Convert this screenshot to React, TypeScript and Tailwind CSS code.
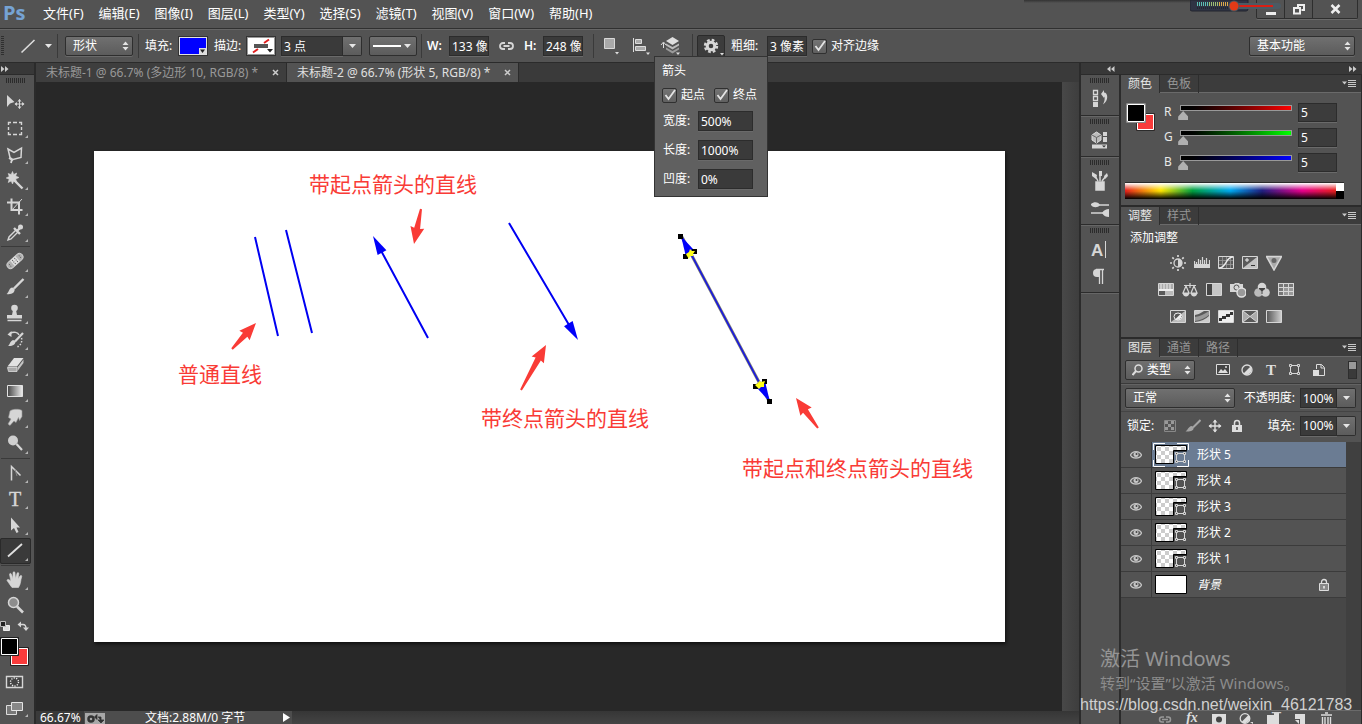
import { useState } from 'react';
import type { ReactNode } from 'react';

const LIGHT = '#d6d6d6';

const menus = ['文件(F)', '编辑(E)', '图像(I)', '图层(L)', '类型(Y)', '选择(S)', '滤镜(T)', '视图(V)', '窗口(W)', '帮助(H)'];

function Svg({ w, h, children, className = '' }: { w: number; h: number; children: ReactNode; className?: string }) {
  return (
    <svg width={w} height={h} viewBox={`0 0 ${w} ${h}`} fill="none" className={`block shrink-0 ${className}`} aria-hidden="true">
      {children}
    </svg>
  );
}

function UpDown() {
  return (
    <Svg w={7} h={10} className="pointer-events-none absolute right-1 top-1/2 -translate-y-1/2">
      <path d="M0.5 4L3.5 0.5L6.5 4zM0.5 6L3.5 9.5L6.5 6z" fill="#e4e4e4" />
    </Svg>
  );
}

function Down() {
  return <Svg w={7} h={4}><path d="M0 0H7L3.5 4z" fill="#e6e6e6" /></Svg>;
}

function Picker({ label, options, className }: { label: string; options: string[]; className: string }) {
  return (
    <div className={`relative h-5 shrink-0 ${className}`}>
      <select aria-label={label} className="block h-full w-full appearance-none rounded-[2px] border border-[#2e2e2e] bg-linear-to-b from-[#707070] to-[#5c5c5c] pl-[7px] text-xs leading-4 text-white shadow-[0_1px_0_#6a6a6a]">
        {options.map(o => <option key={o}>{o}</option>)}
      </select>
      <UpDown />
    </div>
  );
}

function Field({ label, value, className }: { label: string; value: string; className: string }) {
  return (
    <input
      aria-label={label}
      defaultValue={value}
      className={`block shrink-0 border border-[#2c2c2c] bg-[#3a3a3a] text-xs leading-4 text-white shadow-[0_1px_0_#6a6a6a] outline-none ${className}`}
    />
  );
}

function Check({ label }: { label: string }) {
  return (
    <label className="flex shrink-0 items-center gap-1 whitespace-nowrap text-white">
      <span className="relative block h-[15px] w-[15px]">
        <input type="checkbox" defaultChecked className="peer block h-[15px] w-[15px] appearance-none rounded-[2px] border border-[#303030] bg-linear-to-b from-[#747474] to-[#606060]" />
        <svg width="15" height="15" viewBox="0 0 15 15" fill="none" className="pointer-events-none absolute left-0 top-0 hidden peer-checked:block">
          <path d="M3.5 7L6.5 11L13 2" stroke="#e4e4e4" strokeWidth="1.8" />
        </svg>
      </span>
      {label}
    </label>
  );
}

function Divider({ className = '' }: { className?: string }) {
  return <div className={`h-6 w-px shrink-0 bg-[#3a3a3a] ${className}`} />;
}

function Grip({ className = '' }: { className?: string }) {
  return <div className={`h-[5px] w-5 bg-[repeating-linear-gradient(90deg,#2b2b2b_0_1px,#535353_1px_2px)] ${className}`} />;
}

/* ---------- top bars ---------- */

function RecorderBadge() {
  return (
    <Svg w={92} h={12} className="pointer-events-none absolute right-[80px] top-0">
      <path d="M0 0H58V9Q58 11 56 11H2Q0 11 0 9z" fill="#2f3444" stroke="#22252f" />
      {Array.from({ length: 16 }, (_, i) => (
        <path key={i} d={`M${7.5 + i * 2} 2v4`} stroke={i < 6 ? '#5cc0b4' : i < 11 ? '#9dbf73' : '#dda94b'} />
      ))}
      <path d="M7 8H40" stroke="#16181f" strokeDasharray="1 1" />
      <rect x="40" y="3" width="51" height="6" rx="3" fill="#4c5a63" />
      <rect x="46" y="5" width="37" height="2" fill="#d91f14" />
      <circle cx="44" cy="6" r="5.5" fill="#48565e" />
      <circle cx="44" cy="6" r="4.5" fill="#e23a17" />
    </Svg>
  );
}

function MenuBar() {
  return (
    <header className="relative flex h-[29px] shrink-0 items-start border-b border-[#303030] bg-[#535353]">
      <span className="w-9 pl-[3px] font-['Open_Sans'] text-[20px] leading-[26px] font-bold text-[#76a3d4]">Ps</span>
      <nav className="flex gap-px text-[13px] leading-[27px] text-white">
        {menus.map(m => <button key={m} className="shrink-0 px-[7px] whitespace-nowrap">{m}</button>)}
      </nav>
      <div className="ml-auto mr-1 flex h-[19px] rounded-b-[2px] border border-t-0 border-[#2e2e2e] shadow-[0_1px_0_#6a6a6a]">
        <button aria-label="最小化" className="grid w-7 place-items-center border-r border-[#2e2e2e]">
          <Svg w={12} h={14}><path d="M1 11.5h10" stroke="#eee" strokeWidth="3" /></Svg>
        </button>
        <button aria-label="还原" className="grid w-7 place-items-center border-r border-[#2e2e2e]">
          <Svg w={12} h={12}><path d="M5 4V2h6v5H8.5M1 5h6v5.5H1z" stroke="#eee" strokeWidth="2" /></Svg>
        </button>
        <button aria-label="关闭" className="grid w-11 place-items-center">
          <Svg w={11} h={10}><path d="M1.5 1l8 8m0-8l-8 8" stroke="#eee" strokeWidth="2.5" /></Svg>
        </button>
      </div>
      <div className="pointer-events-none absolute right-[150px] top-0 h-[3px] w-[188px] bg-linear-to-b from-[#333] to-transparent" />
      <RecorderBadge />
    </header>
  );
}

function ArrowheadPopup() {
  const rows = [['宽度', '500%'], ['长度', '1000%'], ['凹度', '0%']];
  return (
    <div className="absolute -left-[43px] top-[21px] z-20 flex h-[141px] w-[114px] flex-col border border-[#333] bg-[#606060] pl-[7px] text-xs leading-4 text-white">
      <div className="mt-[6px]">箭头</div>
      <div className="my-2 flex h-[18px] items-center gap-[9px]">
        <Check label="起点" />
        <Check label="终点" />
      </div>
      {rows.map(([name, value]) => (
        <div key={name} className="flex h-[29px] shrink-0 items-start">
          <span className="w-9 pl-px leading-5">{name}:</span>
          <Field label={name} value={value} className="h-5 w-[55px] pl-[2px]" />
        </div>
      ))}
    </div>
  );
}

function OptionsBar() {
  return (
    <div className="flex h-[33px] shrink-0 items-center border-t border-[#666] bg-[#535353] text-xs leading-4 whitespace-nowrap text-white">
      <div className="ml-px h-5 w-[3px] bg-[repeating-linear-gradient(#2f2f2f_0_1px,#535353_1px_2px)]" />
      <button aria-label="直线工具" className="ml-4 flex items-center gap-[9px]">
        <Svg w={16} h={16}><path d="M1.5 14.5L14.5 2" stroke="#ddd" strokeWidth="1.6" /></Svg>
        <Down />
      </button>
      <Divider className="ml-[5px]" />
      <Picker label="工具模式" options={['形状', '路径', '像素']} className="ml-[7px] w-[68px]" />
      <Divider className="ml-[5px]" />
      <span className="ml-[6px] w-[34px]">填充:</span>
      <button aria-label="填充颜色" className="flex h-[18px] w-7 items-end justify-end border border-[#e0e0e0] bg-[#0000ff] outline outline-[#333]">
        <Svg w={7} h={6}><path d="M0 0h7v6H0z" fill="#ddd" /><path d="M1 1.5h5L3.5 5z" fill="#222" /></Svg>
      </button>
      <span className="ml-[7px] w-[33px]">描边:</span>
      <button aria-label="描边颜色" className="border border-[#999] outline outline-[#333]">
        <Svg w={26} h={16}>
          <path d="M0 0h26v16H0z" fill="#fff" />
          <path d="M5 14.5L10 11M16 5L21 1.5" stroke="#e02020" strokeWidth="2" />
          <path d="M6 6h14v4H6z" fill="#555" />
          <path d="M19 11h6l-3 3.5z" fill="#222" />
        </Svg>
      </button>
      <div className="ml-[6px] flex">
        <Field label="描边宽度" value="3 点" className="h-5 w-[62px] pl-[2px]" />
        <button aria-label="描边宽度选项" className="grid h-5 w-[19px] place-items-center rounded-r-[2px] border border-l-0 border-[#2e2e2e] bg-linear-to-b from-[#707070] to-[#5c5c5c]"><Down /></button>
      </div>
      <button aria-label="描边类型" className="ml-[7px] flex h-5 w-12 items-center gap-[3px] rounded-[2px] border border-[#2e2e2e] bg-linear-to-b from-[#707070] to-[#5c5c5c] pl-[3px]">
        <span className="h-[2px] w-7 bg-white" />
        <Down />
      </button>
      <Divider className="ml-1" />
      <span className="ml-[5px] w-[22px] font-semibold">W:</span>
      <Field label="宽度" value="133 像素" className="h-5 w-10 pl-[2px]" />
      <button aria-label="链接宽高" className="ml-[10px]">
        <Svg w={15} h={10}><path d="M6 2H4a3 3 0 0 0 0 6h2M9 2h2a3 3 0 0 1 0 6H9M4.5 5h6" stroke={LIGHT} strokeWidth="1.8" /></Svg>
      </button>
      <span className="ml-[10px] w-[19px] font-semibold">H:</span>
      <Field label="高度" value="248 像素" className="h-5 w-10 pl-[2px]" />
      <Divider className="ml-[10px]" />
      <button aria-label="路径操作" className="ml-[9px]">
        <Svg w={18} h={20}>
          <path d="M1.5 2.5h10v10h-10z" fill="#a9a9a9" stroke="#d8d8d8" />
          <path d="M12 16h4l-2 2.5z" fill="#ddd" />
        </Svg>
      </button>
      <button aria-label="路径对齐方式" className="ml-[11px]">
        <Svg w={18} h={20}>
          <path d="M1.5 2v14" stroke="#ddd" />
          <path d="M3.5 3.5h6v4h-6zM3.5 10.5h10v4h-10z" fill="#aaa" stroke="#ddd" />
          <path d="M14 16.5h4l-2 2.5z" fill="#ddd" />
        </Svg>
      </button>
      <button aria-label="路径排列方式" className="ml-[10px]">
        <Svg w={22} h={20}>
          <path d="M3.5 12V7M1 9l2.5-3L6 9" stroke="#ddd" />
          <path d="M6 13.5l6.5 4 6.5-4v-2l-6.5 3.5L6 11.5z" fill="#9a9a9a" />
          <path d="M6 9.5l6.5 4 6.5-4v-2l-6.5 3.5L6 7.5z" fill="#bbb" />
          <path d="M6 5l6.5-4L19 5l-6.5 4z" fill="#dedede" />
          <path d="M16 16.5h4l-2 2.5z" fill="#ddd" />
        </Svg>
      </button>
      <Divider className="ml-[10px]" />
      <div className="relative ml-1">
        <button aria-label="几何选项" className="block h-[22px] w-7 rounded-[2px] border border-[#2b2b2b] bg-[#3c3c3c] pl-[5px]">
          <Svg w={21} h={20}>
            <circle cx="8" cy="10" r="6" stroke={LIGHT} strokeWidth="2.4" strokeDasharray="2.7 2.01" />
            <circle cx="8" cy="10" r="3.8" stroke={LIGHT} strokeWidth="3" />
            <path d="M17 17h4l-2 2.5z" fill="#ddd" />
          </Svg>
        </button>
        <ArrowheadPopup />
      </div>
      <span className="ml-[6px] w-9">粗细:</span>
      <Field label="粗细" value="3 像素" className="h-5 w-10 pl-[2px]" />
      <div className="ml-[5px]"><Check label="对齐边缘" /></div>
      <Picker label="工作区" options={['基本功能', '绘画', '摄影', '排版规则']} className="ml-auto mr-[7px] w-[106px]" />
    </div>
  );
}

/* ---------- tools ---------- */

const tools: Record<string, { name: string; art: ReactNode; corner?: boolean }> = {
  move: {
    name: '移动工具', art: <>
      <path d="M7 6V18L10 14.5L14.5 13z" fill={LIGHT} />
      <path d="M19.5 10.5v9M15 15h9" stroke={LIGHT} />
      <path d="M17.5 12.5l2-2.5 2 2.5zM17.5 17.5l2 2.5 2-2.5zM17 13l-2.5 2 2.5 2zM22 13l2.5 2-2.5 2z" fill={LIGHT} />
    </>,
  },
  marquee: { name: '矩形选框工具', corner: true, art: <path d="M8.5 10V7.5H11M13 7.5h4M19 7.5h2.5V10M21.5 12v3M21.5 17v2.5H19M17 19.5h-4M11 19.5H8.5V17M8.5 15v-3" stroke={LIGHT} strokeWidth="1.4" /> },
  lasso: { name: '多边形套索工具', corner: true, art: <><path d="M8 8L14 11.5L21.5 7L21 16.5L13 18.5L10 16.5z" stroke={LIGHT} strokeWidth="1.5" /><path d="M9 17l4 2.5M12 18l-1 4" stroke={LIGHT} strokeWidth="1.8" /></> },
  wand: { name: '魔棒工具', corner: true, art: <><path d="M12.5 4.5l1.2 3 3-1.5-1 3 3.3 1.5-3.3 1.5 1 3.5-3-1.5-1.2 3-1.3-3-3 1.5 1-3.2-3-1.3 3-1.5-1-3 3 1z" fill={LIGHT} stroke={LIGHT} strokeWidth=".6" /><path d="M14 13l8.5 8.5" stroke={LIGHT} strokeWidth="2.4" /></> },
  crop: { name: '裁剪工具', corner: true, art: <><path d="M7 9.5h12V21.5M11.5 5.5V17h11" stroke={LIGHT} strokeWidth="2" /><path d="M12 17L22 6" stroke={LIGHT} /></> },
  dropper: { name: '吸管工具', corner: true, art: <><path d="M16 11l-7 7-1 3 3-1 7-7" stroke={LIGHT} strokeWidth="1.4" /><path d="M14 9l6 6M17 12l4-4" stroke={LIGHT} strokeWidth="2.4" /><circle cx="20.5" cy="8" r="2.5" fill={LIGHT} /></> },
  heal: { name: '污点修复画笔工具', corner: true, art: <g transform="rotate(-42 15 12)"><rect x="5.5" y="8.5" width="19" height="7" rx="3.5" fill="#b0b0b0" stroke="#cfcfcf" /><path d="M11.5 8.5h7v7h-7z" fill="#dedede" /><path d="M13 10h1M16 10h1M13 12h1M16 12h1M13 14h1M16 14h1M8 11h1M8 13h1M21 11h1M21 13h1" stroke="#555" /></g> },
  brush: { name: '画笔工具', corner: true, art: <><path d="M23.5 4L14 13.5" stroke={LIGHT} strokeWidth="2.4" /><path d="M14.5 13.5c1 4-3 6.5-8 5.5 2.5-1.2 2-5.5 5.5-6.5z" fill={LIGHT} /></> },
  stamp: { name: '仿制图章工具', corner: true, art: <><circle cx="14.5" cy="7" r="3.3" fill={LIGHT} /><path d="M13 9h3l1 5h5v3.5H7V14h5z" fill={LIGHT} /><path d="M7.5 19.5h14" stroke={LIGHT} strokeWidth="1.5" /></> },
  history: { name: '历史记录画笔工具', corner: true, art: <><path d="M10 6.5c4-2.5 8-1 9 1.5" stroke={LIGHT} strokeWidth="1.5" /><path d="M11.5 4v6L7.5 7.5z" fill={LIGHT} /><path d="M23 6l-8 8.5" stroke={LIGHT} strokeWidth="2.2" /><path d="M15.5 14c.5 3.5-3.5 5.5-7.5 5 2-1 1.5-4.5 5-6z" fill={LIGHT} /><path d="M21.5 11c1 4-1 8-5 9" stroke={LIGHT} strokeWidth="1.5" strokeDasharray="1.5 1.5" /></> },
  eraser: { name: '橡皮擦工具', corner: true, art: <><path d="M7.5 13.5L14 5h9.5L17 13.5z" fill="#e2e2e2" /><path d="M7.5 14.5H17V18.5H8.5z" fill="#a9a9a9" stroke="#ddd" strokeWidth=".8" /><path d="M17.5 14.5L23.5 6.5V10l-6 8z" fill="#c4c4c4" /></> },
  gradient: { name: '渐变工具', corner: true, art: <><defs><linearGradient id="gt"><stop stopColor="#444" /><stop offset="1" stopColor="#eee" /></linearGradient></defs><path d="M7.5 6.5h15v11h-15z" fill="url(#gt)" stroke="#e2e2e2" /></> },
  smudge: { name: '涂抹工具', corner: true, art: <path d="M10 6c2-2 9-2.5 12-.5v6l-2.5 4-1-3-2.5 5-2-1.5-4 4.5L8 19l3-5-2.5-1.5z" fill={LIGHT} stroke="#999" strokeWidth=".6" /> },
  dodge: { name: '减淡工具', corner: true, art: <><circle cx="13" cy="9.5" r="5" fill="#cfcfcf" /><path d="M16.5 13l5.5 6" stroke={LIGHT} strokeWidth="2.2" /></> },
  pen: { name: '钢笔工具', corner: true, art: <><path d="M11.5 20.5V6.5L20.5 15.5" stroke={LIGHT} strokeWidth="1.5" /><path d="M15 9.5l2 6.5" stroke="#888" /></> },
  type: { name: '横排文字工具', corner: true, art: <text x="15" y="20" textAnchor="middle" fontFamily="Liberation Serif, serif" fontSize="20" fill={LIGHT} stroke={LIGHT} strokeWidth=".4">T</text> },
  select: { name: '路径选择工具', corner: true, art: <path d="M11 5.5V18.5L14 16L16.5 21L18.5 20L16.5 15.5H20z" fill={LIGHT} /> },
  line: { name: '直线工具', corner: true, art: <path d="M8 18.5L22 6" stroke="#e0e0e0" strokeWidth="1.8" /> },
  hand: { name: '抓手工具', corner: true, art: <path d="M12 20.5C10 18 8.5 15.5 7 13.5c0-1.5 2-1.5 4 .8L9.5 7.5c0-1.5 1.7-1.5 2 0l1.5 4V6c0-1.6 2-1.6 2 0l.5 5.5L17 6.5c.5-1.5 2-1 1.8.5L18 12l2-3c.8-1.2 2.2-.4 1.7.8C20.5 13 21 17 18.5 20.5z" fill={LIGHT} stroke={LIGHT} strokeWidth=".6" /> },
  zoom: { name: '缩放工具', art: <><circle cx="13.5" cy="9.5" r="5" fill="#8d8d8d" stroke={LIGHT} strokeWidth="1.5" /><path d="M17 13.5l6 6" stroke={LIGHT} strokeWidth="2.6" /></> },
};

function ToolGroup({ ids }: { ids: string[] }) {
  return (
    <>
      {ids.map(id => {
        const t = tools[id];
        return (
          <button key={id} aria-label={t.name} className={`block h-[26px] w-[31px] shrink-0 ${id === 'line' ? 'rounded-[2px] bg-[#3a3a3a] outline -outline-offset-1 outline-[#2a2a2a]' : ''}`}>
            <Svg w={30} h={26}>
              {t.art}
              {t.corner && <path d="M28 20v3h-3z" fill="#b5b5b5" />}
            </Svg>
          </button>
        );
      })}
    </>
  );
}

function ToolRule({ className = 'my-px' }: { className?: string }) {
  return <div className={`ml-px h-px w-[29px] shrink-0 bg-[#3a3a3a] ${className}`} />;
}

function ToolBar() {
  return (
    <aside className="flex w-9 shrink-0 flex-col overflow-hidden border-r-2 border-[#2b2b2b] bg-[#535353]">
      <button aria-label="展开工具栏" className="flex h-[13px] shrink-0 items-center border-y border-[#2b2b2b] bg-[#383838] pl-px">
        <Svg w={8} h={6}><path d="M0 0l3.5 3L0 6zM4 0l3.5 3L4 6z" fill="#ccc" /></Svg>
      </button>
      <Grip className="mt-[3px] mb-[6px] ml-[6px] shrink-0" />
      <ToolGroup ids={['move', 'marquee', 'lasso', 'wand', 'crop', 'dropper']} />
      <ToolRule className="mt-px mb-[2px]" />
      <ToolGroup ids={['heal', 'brush', 'stamp', 'history', 'eraser', 'gradient', 'smudge', 'dodge']} />
      <ToolRule />
      <ToolGroup ids={['pen', 'type', 'select', 'line']} />
      <ToolRule />
      <ToolGroup ids={['hand', 'zoom']} />
      <Svg w={30} h={80}>
        <path d="M3.5 6.5h6v5h-6z" fill="#ddd" stroke="#eee" />
        <path d="M0.5 2.5h5v5h-5z" fill="#222" stroke="#bbb" />
        <path d="M20 5.5h3q3 0 3 4" stroke={LIGHT} strokeWidth="1.4" />
        <path d="M21 2.5v6l-3.5-3zM23 8.5h6l-3 3.5z" fill={LIGHT} />
        <path d="M10.5 28.5h18v18h-18z" fill="#f93b3b" stroke="#222" /><path d="M11.5 29.5h16v16h-16z" stroke="#fff" />
        <path d="M0.5 18.5h18v18h-18z" fill="#000" stroke="#222" /><path d="M1.5 19.5h16v16h-16z" stroke="#fff" />
        <path d="M6.5 57.5h16v11h-16z" fill="#444" stroke={LIGHT} strokeWidth="1.4" />
        <circle cx="14.5" cy="63" r="4" stroke="#eee" strokeWidth="1.4" strokeDasharray="1.2 1.3" />
      </Svg>
      <button aria-label="更改屏幕模式" className="shrink-0">
        <Svg w={30} h={22}>
          <path d="M6.5 6.5h10v9h-10z" fill="#777" stroke="#ddd" />
          <path d="M11.5 3.5h11v8h-11z" fill="#888" stroke="#e5e5e5" />
          <path d="M28 15v3h-3z" fill="#b5b5b5" />
        </Svg>
      </button>
    </aside>
  );
}

/* ---------- document ---------- */

function angle(x1: number, y1: number, x2: number, y2: number) {
  return (Math.atan2(y2 - y1, x2 - x1) * 180) / Math.PI;
}

function RedArrow({ from, to }: { from: [number, number]; to: [number, number] }) {
  const len = Math.hypot(to[0] - from[0], to[1] - from[1]);
  return (
    <g transform={`translate(${to[0]} ${to[1]}) rotate(${angle(...from, ...to)})`}>
      <path d={`M0 0L-17 -7L-16 -3L${-len} -1V1L-16 3L-17 7z`} fill="#f93b36" />
    </g>
  );
}

function Head({ from, to }: { from: [number, number]; to: [number, number] }) {
  return (
    <path d="M0 0L-19 -5V5z" fill="#0000fa" transform={`translate(${to[0]} ${to[1]}) rotate(${angle(...from, ...to)})`} />
  );
}

function Drawing() {
  return (
    <svg width="911" height="491" viewBox="0 0 911 491" fill="none" className="absolute left-0 top-0">
      <g stroke="#0000f2" strokeWidth="2">
        <path d="M161 86L184 185M192 79L218 182M334 187L284 94M415 72L478 179" />
        <path d="M588 86L675 250" stroke="#777" strokeWidth="3" />
        <path d="M588 86L675 250" stroke="#1515e8" strokeWidth="1.5" />
      </g>
      <Head from={[334, 187]} to={[279, 85]} />
      <Head from={[415, 72]} to={[484, 189]} />
      <Head from={[676, 251]} to={[587, 85]} />
      <Head from={[587, 85]} to={[676, 251]} />
      <path d="M591 105l9-4M660 235l10-4" stroke="#000" strokeWidth="2" />
      <path d="M584 83h5v5h-5zM589 103h5v5h-5zM598 98h5v5h-5zM659 233h5v5h-5zM668 228h5v5h-5zM673 248h5v5h-5z" fill="#000" />
      <path d="M592 103l3-2 1-3 2 2 3 0-2 3 0 2-3 0-1 3-2-3zM661 234l3-2 1-2 2 1 4-1-1 3 0 3-3 0-2 2-2-2z" fill="#ffff1a" />
      <RedArrow from={[327, 58]} to={[320, 93]} />
      <RedArrow from={[138, 198]} to={[162, 172]} />
      <RedArrow from={[427, 239]} to={[452, 194]} />
      <RedArrow from={[724, 277]} to={[702, 247]} />
    </svg>
  );
}

function DocTab({ title, active }: { title: string; active?: boolean }) {
  return (
    <div className={`flex h-[19px] items-center border-r border-[#2b2b2b] pr-[7px] pl-[10px] ${active ? 'bg-[#535353] text-[#e0e0e0]' : 'bg-[#3e3e3e] text-[#999]'}`}>
      <button className="text-xs leading-[18px] whitespace-nowrap">{title}</button>
      <button aria-label="关闭文档" className="ml-[14px]">
        <Svg w={7} h={7}><path d="M1 1l5 5m0-5l-5 5" stroke="#ccc" strokeWidth="1.5" /></Svg>
      </button>
    </div>
  );
}

function DocumentArea() {
  return (
    <main className="flex min-w-0 flex-1 flex-col">
      <div className="flex h-5 shrink-0 border-t border-[#2b2b2b] bg-[#3a3a3a]">
        <DocTab title="未标题-1 @ 66.7% (多边形 10, RGB/8) *" />
        <DocTab title="未标题-2 @ 66.7% (形状 5, RGB/8) *" active />
      </div>
      <div className="flex min-h-0 flex-1">
        <div className="flex min-w-0 flex-1 bg-[#282828] pt-[69px] pr-[57px] pb-[69px] pl-[58px]">
          <div className="relative flex-1 overflow-hidden bg-white text-[21px] leading-7 whitespace-nowrap text-[#f93b36] shadow-[1px_2px_3px_#111]">
            <Drawing />
            <span className="absolute left-[215px] top-[19px]">带起点箭头的直线</span>
            <span className="absolute left-[84px] top-[209px]">普通直线</span>
            <span className="absolute left-[387px] top-[253px]">带终点箭头的直线</span>
            <span className="absolute left-[648px] top-[303px]">带起点和终点箭头的直线</span>
          </div>
        </div>
        <div className="w-[17px] shrink-0 bg-linear-to-r from-[#484848] to-[#3e3e3e]" />
      </div>
      <div className="flex h-[13px] shrink-0 items-start bg-linear-to-b from-[#363636] to-[#444] text-xs leading-[13px] text-white">
        <div className="flex h-[13px] w-[256px] items-center bg-[#4d4d4d]">
          <span className="h-full w-12 bg-[#3a3a3a] pl-1">66.67%</span>
          <Svg w={22} h={13} className="ml-px">
            <path d="M0 2h20v11H0z" fill="#a8a8a8" />
            <circle cx="6" cy="8" r="2.5" stroke="#333" strokeWidth="2.5" />
            <path d="M13 6h3v4M12 3.5L9.5 6L12 8.5zM13 9h6l-3 3z" fill="#333" stroke="#333" strokeWidth=".8" />
          </Svg>
          <span className="ml-[38px]">文档:2.88M/0 字节</span>
          <button aria-label="状态栏选项" className="ml-auto pr-[2px]"><Svg w={7} h={9}><path d="M0 0l7 4.5-7 4.5z" fill="#fff" /></Svg></button>
        </div>
      </div>
    </main>
  );
}

/* ---------- collapsed dock ---------- */

function DockGroup({ children }: { children: ReactNode }) {
  return (
    <div className="flex flex-col items-center border-b border-[#2b2b2b] pt-[3px] shadow-[0_1px_0_#666]">
      <Grip className="mb-1 ml-[9px] self-start" />
      <div className="flex flex-col gap-px">{children}</div>
    </div>
  );
}

function DockButton({ name, children }: { name: string; children: ReactNode }) {
  return <button aria-label={name}><Svg w={20} h={27}>{children}</Svg></button>;
}

function Dock() {
  return (
    <div className="flex w-[38px] shrink-0 flex-col bg-[#535353]">
      <DockGroup>
        <button aria-label="历史记录" className="h-[28px] pt-[2px]"><Svg w={20} h={26}>
          <path d="M3.5 1.5h4v4h-4zM3.5 7.5h4v4h-4z" stroke={LIGHT} strokeWidth="1.3" />
          <path d="M3 13h5v5H3z" fill={LIGHT} />
          <path d="M11 5l3-4v2.5c4 0 5 8-1 12 2-4 2-7 1-8V9z" fill={LIGHT} />
        </Svg></button>
      </DockGroup>
      <DockGroup>
        <button aria-label="属性" className="h-[28px] pt-px"><Svg w={20} h={26}>
          <path d="M2 5l4.5-3L11 5v5l-4.5 3L2 10z" fill="#bbb" stroke="#ddd" />
          <path d="M2 5l4.5 2.5L11 5M6.5 7.5V13" stroke="#666" />
          <path d="M13 2h4v4h-4zM13 7h4v5h-4zM2 14.5h15v4H2z" fill={LIGHT} />
          <path d="M12 15.5h4l-2 2z" fill="#333" />
        </Svg></button>
      </DockGroup>
      <DockGroup>
        <DockButton name="画笔预设">
          <path d="M6 13h8v8H6zM8 12L4 5M10 12V4M12 12l4-5" fill={LIGHT} stroke={LIGHT} strokeWidth="1.5" />
          <path d="M2 3l5 3-1 4-4-3zM9 2h3v5H9zM14 7l3-3 1 3-3 3z" fill={LIGHT} />
        </DockButton>
        <DockButton name="画笔">
          <path d="M6 8h13M1 16h12" stroke={LIGHT} strokeWidth="1.5" />
          <path d="M1 7c3-3 8-2 9 1-2 3-7 3-9 0zM12 16c2-3 4-4 7-4v8c-3 0-5-1-7-4z" fill={LIGHT} />
        </DockButton>
      </DockGroup>
      <DockGroup>
        <DockButton name="字符">
          <text x="1" y="19" fontFamily="Liberation Sans, sans-serif" fontWeight="bold" fontSize="17" fill={LIGHT}>A</text>
          <path d="M15.5 4v17" stroke={LIGHT} />
        </DockButton>
        <DockButton name="段落">
          <path d="M9.5 4.5V19M12.5 4.5V19M6 4.5h8" stroke={LIGHT} strokeWidth="1.3" />
          <path d="M9 4H7Q3 4 3 8t4 4h2z" fill={LIGHT} />
        </DockButton>
      </DockGroup>
    </div>
  );
}

/* ---------- panels ---------- */

function PanelTabs({ names }: { names: string[] }) {
  return (
    <div className="flex h-[18px] shrink-0 border-b border-[#6a6a6a] bg-[#3c3c3c] text-xs leading-4">
      {names.map((n, i) => (
        <button key={n} className={`h-[18px] w-[39px] border-r border-[#2e2e2e] ${i === 0 ? 'bg-[#535353] text-[#e6e6e6]' : 'text-[#969696]'}`}>{n}</button>
      ))}
      <button aria-label="面板菜单" className="ml-auto pr-[5px]">
        <Svg w={14} h={8}><path d="M0 1.5h5L2.5 4.5zM6 0h8v1H6zM6 2h8v1H6zM6 4h8v1H6zM6 6h8v1H6z" fill="#c8c8c8" /></Svg>
      </button>
    </div>
  );
}

const channels = [
  { name: 'R', track: 'bg-linear-to-r from-black to-[#ff0000]' },
  { name: 'G', track: 'bg-linear-to-r from-black to-[#00ff00]' },
  { name: 'B', track: 'bg-linear-to-r from-black to-[#0000ff]' },
];

function Channel({ name, track }: { name: string; track: string }) {
  const [value, setValue] = useState(5);
  return (
    <div className="flex h-[25px] items-start">
      <span className="w-4 text-xs leading-[18px] text-[#e8e8e8]">{name}</span>
      <div className="mt-[2px] min-w-0 flex-1">
        <div className={`h-[6px] border border-[#999] ${track}`} />
        <input
          type="range"
          min={0}
          max={255}
          value={value}
          aria-label={name}
          onChange={e => setValue(Number(e.target.value))}
          className="-ml-1 block h-[9px] w-[calc(100%+8px)] appearance-none bg-transparent [&::-webkit-slider-thumb]:h-[9px] [&::-webkit-slider-thumb]:w-[10px] [&::-webkit-slider-thumb]:appearance-none [&::-webkit-slider-thumb]:bg-[#b0b0b0] [&::-webkit-slider-thumb]:[clip-path:polygon(50%_0,100%_60%,100%_100%,0_100%,0_60%)]"
        />
      </div>
      <input
        aria-label={`${name} 值`}
        value={value}
        onChange={e => setValue(Number(e.target.value) || 0)}
        className="ml-[6px] h-[19px] w-[39px] border border-[#2c2c2c] bg-[#3c3c3c] pl-[2px] text-xs text-white shadow-[0_1px_0_#6a6a6a] outline-none"
      />
    </div>
  );
}

function ColorPanel() {
  return (
    <section className="shrink-0 border-b-2 border-[#2b2b2b]">
      <PanelTabs names={['颜色', '色板']} />
      <div className="flex h-[112px] flex-col">
        <div className="flex pt-[10px] pr-[24px] pl-[5px]">
          <Svg w={38} h={36}>
            <path d="M10.5 10.5h18v17h-18z" fill="#f93b3b" stroke="#2b2b2b" /><path d="M11.5 11.5h16v15h-16z" stroke="#fff" />
            <path d="M0.5 0.5h19v19h-19z" fill="#000" stroke="#8b8b8b" /><path d="M1.5 1.5h17v17h-17z" stroke="#fff" />
          </Svg>
          <div className="flex-1">{channels.map(c => <Channel key={c.name} {...c} />)}</div>
        </div>
        <div className="mt-1 mr-[17px] ml-1 flex h-[17px] border-t border-[#2b2b2b]">
          <div className="flex-1 bg-[linear-gradient(to_bottom,#fff,transparent_45%,transparent_50%,#000),linear-gradient(to_right,#e8201c,#ffe600_17%,#00a040_32%,#00a8f0_50%,#202080_65%,#e8008c_84%,#e8201c)]" />
          <div className="w-2 bg-[linear-gradient(#fff_50%,#000_50%)]" />
        </div>
      </div>
    </section>
  );
}

function Box({ children }: { children?: ReactNode }) {
  return <><path d="M0.5 1.5h15v12h-15z" fill="#5a5a5a" stroke={LIGHT} />{children}</>;
}

const adjustments: { name: string; art: ReactNode }[][] = [
  [
    { name: '亮度/对比度', art: <><circle cx="8" cy="8" r="4" stroke={LIGHT} strokeWidth="1.3" /><path d="M8 4a4 4 0 0 1 0 8z" fill={LIGHT} /><path d="M8 0v2M8 14v2M0 8h2M14 8h2M2.3 2.3l1.5 1.5M12.2 12.2l1.5 1.5M13.7 2.3l-1.5 1.5M3.8 12.2l-1.5 1.5" stroke={LIGHT} strokeWidth="1.7" /></> },
    { name: '色阶', art: <><path d="M0 9h16v4H0z" fill={LIGHT} /><path d="M.5 6v4M2.5 7v3M4.5 4v6M6.5 5v5M8.5 2v8M10.5 5v5M12.5 3v7M15.5 5v5" stroke={LIGHT} strokeWidth="1.2" /></> },
    { name: '曲线', art: <Box><path d="M4.5 2v11M8.5 2v11M12.5 2v11M1 5.5h14M1 9.5h14" stroke="#999" strokeWidth=".8" /><path d="M1 13c8 0 6-11 14-11" stroke="#eee" strokeWidth="1.5" /></Box> },
    { name: '曝光度', art: <Box><path d="M15 2v11H1z" fill="#c2c2c2" /><path d="M3 5h4M5 3v4" stroke="#eee" /><path d="M9 10.5h4" stroke="#333" /></Box> },
    { name: '自然饱和度', art: <><path d="M0.5 1.5h15L8 15z" fill="#aaa" stroke={LIGHT} strokeWidth="1.5" /><circle cx="8" cy="5.5" r="2.5" fill="#666" /></> },
  ],
  [
    { name: '色相/饱和度', art: <Box><path d="M1 2h14v5H1z" fill="#aaa" /><path d="M3 2v5M6 2v5M9 2v5M12 2v5" stroke="#eee" /><path d="M1 8h14" stroke="#eee" strokeWidth="2" /><path d="M7 9h8v4H7z" fill="#bbb" /></Box> },
    { name: '色彩平衡', art: <><path d="M2 3.5h12M8 1v5M4 4l-3 7h6zM12 4l-3 7h6z" stroke={LIGHT} strokeWidth="1.2" /><path d="M0.5 11h7q-1 3.5-3.5 3.5T.5 11zM8.5 11h7q-1 3.5-3.5 3.5T8.5 11z" fill={LIGHT} /></> },
    { name: '黑白', art: <Box><path d="M1 2h5v11H1z" fill="#444" /><path d="M6 2h9v11H6z" fill="#c6c6c6" /></Box> },
    { name: '照片滤镜', art: <><path d="M0 2h4l1-1h4l1 1h3v8H0z" fill={LIGHT} /><circle cx="6.5" cy="5.5" r="2.5" stroke="#555" /><circle cx="11.5" cy="10.5" r="4.5" fill="#999" stroke="#e4e4e4" strokeWidth="1.4" /></> },
    { name: '通道混合器', art: <><circle cx="8" cy="5" r="4.3" fill={LIGHT} /><circle cx="4.5" cy="10.5" r="4.3" fill="#bbb" /><circle cx="11.5" cy="10.5" r="4.3" fill="#ccc" /><path d="M5 6.5h6L8 9zM8 9v3" fill="#444" stroke="#444" /></> },
    { name: '颜色查找', art: <><path d="M0 1h16v13H0z" fill={LIGHT} /><path d="M1 2h4v3H1zM6 2h4v3H6zM11 2h4v3h-4zM1 6h4v3H1zM1 10h4v3H1z" fill="#777" /><path d="M6 6h4v3H6zM11 6h4v3h-4zM6 10h4v3H6zM11 10h4v3h-4z" fill="#999" /></> },
  ],
  [
    { name: '反相', art: <Box><path d="M15 2v11H1z" fill="#bbb" /><ellipse cx="8" cy="7.5" rx="4" ry="3.5" fill="#555" stroke="#eee" /><path d="M11 4.5L5 10.5q4 1 6-1.5z" fill="#eee" /></Box> },
    { name: '色调分离', art: <Box><path d="M1 8q7-1 14-6v4Q9 11 1 12z" fill="#999" /><path d="M1 13q9-1 14-6v6z" fill="#ccc" /><path d="M1 2h9Q6 5 1 6z" fill="#ccc" /></Box> },
    { name: '阈值', art: <Box><path d="M1 2h14v11H1z" fill="#eee" /><path d="M1 9h3V7h4V5h4V3h3v3h-3v2H8v2H4v2H1z" fill="#333" /></Box> },
    { name: '可选颜色', art: <Box><path d="M1 2l7 5.5L1 13zM15 2L8 7.5l7 5.5z" fill="#aaa" /><path d="M1 2l14 11M15 2L1 13" stroke={LIGHT} /></Box> },
    { name: '渐变映射', art: <><defs><linearGradient id="gm"><stop stopColor="#555" /><stop offset="1" stopColor="#d0d0d0" /></linearGradient></defs><path d="M0.5 1.5h15v12h-15z" fill="url(#gm)" stroke={LIGHT} /></> },
  ],
];

function AdjustPanel() {
  return (
    <section className="shrink-0 border-b-2 border-[#2b2b2b]">
      <PanelTabs names={['调整', '样式']} />
      <div className="h-[112px] pt-[3px]">
        <p className="pl-[9px] text-xs leading-5 text-white">添加调整</p>
        <div className="mt-[7px] flex w-[210px] flex-col gap-[11px]">
          {adjustments.map((row, i) => (
            <div key={i} className="flex justify-center gap-2">
              {row.map(a => <button key={a.name} aria-label={a.name}><Svg w={16} h={16}>{a.art}</Svg></button>)}
            </div>
          ))}
        </div>
      </div>
    </section>
  );
}

function PathBox() {
  return (
    <g stroke={LIGHT}>
      <path d="M2.5 2.5h8v8h-8z" />
      <path d="M1.5 1.5h2v2h-2zM9.5 1.5h2v2h-2zM1.5 9.5h2v2h-2zM9.5 9.5h2v2h-2z" fill="#555" />
    </g>
  );
}

function Thumb({ selected }: { selected: boolean }) {
  return (
    <Svg w={36} h={24}>
      {selected && <path d="M12 .5H.5V7M24 .5h11.5V7M.5 17v6.5H12M35.5 17v6.5H24" stroke="#fff" />}
      <defs>
        <pattern id="checker" width="8" height="8" patternUnits="userSpaceOnUse">
          <path d="M0 0h8v8H0z" fill="#fff" /><path d="M0 0h4v4H0zM4 4h4v4H4z" fill="#ccc" />
        </pattern>
      </defs>
      <path d="M2.5 2.5h31v5h-13v13h-18z" fill="url(#checker)" stroke="#000" />
      <path d="M21 8h13" stroke="#000" />
      <g transform="translate(21 8)"><PathBox /></g>
    </Svg>
  );
}

function Eye() {
  return (
    <Svg w={12} h={10}>
      <path d="M0.5 5C2.5 .5 9.5 .5 11.5 5 9.5 9 2.5 9 .5 5z" fill="#555" stroke="#c6c6c6" strokeWidth="1.3" />
      <circle cx="6" cy="4.5" r="2.5" fill="#c6c6c6" /><circle cx="6.5" cy="4" r="1" fill="#444" />
    </Svg>
  );
}

function LayerRow({ name, selected, onSelect }: { name: string; selected: boolean; onSelect: () => void }) {
  const bg = name === '背景';
  return (
    <li className={`flex h-[26px] border-b border-[#3b3b3b] ${selected ? 'bg-[#6b7c93]' : 'bg-[#535353]'}`}>
      <button aria-label="显示/隐藏图层" className="grid w-[31px] shrink-0 place-items-center border-r border-[#3b3b3b] bg-[#535353]"><Eye /></button>
      <button onClick={onSelect} className="flex flex-1 items-center pl-px text-xs leading-4 text-white">
        {bg
          ? <Svg w={36} h={24}><path d="M2.5 2.5h31v18h-31z" fill="#fff" stroke="#000" /></Svg>
          : <Thumb selected={selected} />}
        <span className={`pl-2 ${bg ? 'italic' : ''}`}>{name}</span>
        {bg && (
          <Svg w={10} h={13} className="mr-[17px] ml-auto">
            <path d="M2.5 6V4a2.5 2.5 0 0 1 5 0v2" stroke="#ddd" strokeWidth="1.3" />
            <path d="M0.5 5.5h9v7h-9z" fill="#888" stroke="#ddd" /><path d="M5 8v2.5" stroke="#eee" strokeWidth="1.5" />
          </Svg>
        )}
      </button>
    </li>
  );
}

function Percent({ label }: { label: string }) {
  return (
    <div className="ml-auto flex items-center">
      <span className="pr-[5px]">{label}:</span>
      <Field label={label} value="100%" className="h-5 w-[37px] pl-[2px]" />
      <button aria-label={`${label}选项`} className="grid h-5 w-[19px] place-items-center rounded-r-[2px] border border-l-0 border-[#2e2e2e] bg-linear-to-b from-[#707070] to-[#5c5c5c]"><Down /></button>
    </div>
  );
}

function LayersPanel() {
  const [current, setCurrent] = useState('形状 5');
  return (
    <section className="flex min-h-0 flex-1 flex-col text-xs leading-4 text-white">
      <PanelTabs names={['图层', '通道', '路径']} />
      <div className="flex h-[27px] shrink-0 items-center border-b border-[#3a3a3a] pl-1">
        <div className="relative h-5 w-[70px]">
          <select aria-label="图层筛选" className="block h-full w-full appearance-none rounded-[2px] border border-[#2e2e2e] bg-linear-to-b from-[#707070] to-[#5c5c5c] pl-[21px] text-xs leading-4"><option>类型</option></select>
          <Svg w={11} h={12} className="pointer-events-none absolute left-[7px] top-1"><circle cx="6.5" cy="4.5" r="3.5" stroke="#ddd" strokeWidth="1.5" /><path d="M4 7L.5 11" stroke="#ddd" strokeWidth="2" /></Svg>
          <UpDown />
        </div>
        <div className="ml-[21px] flex items-center gap-[10px]">
          <button aria-label="像素图层"><Svg w={14} h={14}><path d="M0.5 1.5h13v10h-13z" fill="#444" stroke="#ddd" /><path d="M2 10l3-4 2 2 2-2 3 4z" fill="#ddd" /><circle cx="10" cy="4" r="1" fill="#ddd" /></Svg></button>
          <button aria-label="调整图层"><Svg w={14} h={14}><circle cx="7" cy="7" r="5" fill="#555" stroke="#ddd" strokeWidth="1.3" /><path d="M10.5 3.5a5 5 0 0 1-7 7z" fill="#ddd" /></Svg></button>
          <button aria-label="文字图层"><Svg w={14} h={14}><text x="7" y="12" textAnchor="middle" fontFamily="Liberation Serif, serif" fontWeight="bold" fontSize="15" fill="#ddd">T</text></Svg></button>
          <button aria-label="形状图层"><Svg w={14} h={14}><PathBox /></Svg></button>
          <button aria-label="智能对象"><Svg w={14} h={14}><path d="M4.5 6V1.5h5l3 3v8H7M9 1.5v3.5h3" stroke="#ddd" /><path d="M1 7h6v6H1z" fill="#ddd" /></Svg></button>
        </div>
        <button aria-label="图层筛选开关" className="mr-1 ml-auto h-[18px] w-[9px] border border-[#2e2e2e] bg-[linear-gradient(#999_45%,#3a3a3a_45%)]" />
      </div>
      <div className="flex h-[27px] shrink-0 items-center border-t border-[#636363] pr-[5px] pl-1">
        <Picker label="混合模式" options={['正常', '溶解', '变暗']} className="w-[110px]" />
        <Percent label="不透明度" />
      </div>
      <div className="flex h-[31px] shrink-0 items-center border-t border-[#444] pr-[5px] pb-[3px] pl-[6px]">
        <span className="w-9">锁定:</span>
        <button aria-label="锁定透明像素"><Svg w={14} h={14}><path d="M1.5 1.5h11v11h-11z" fill="#555" stroke="#888" /><path d="M2 2h3v3H2zM8 2h3v3H8zM5 5h3v3H5zM2 8h3v3H2zM8 8h3v3H8z" fill="#999" /></Svg></button>
        <button aria-label="锁定图像像素" className="ml-2"><Svg w={16} h={14}><path d="M15.5 1L8 8.5" stroke="#a5a5a5" strokeWidth="2" /><path d="M8.5 8c1 4-4 5-8 4.5 2-1 3-5 6-5.5z" fill="#a5a5a5" /></Svg></button>
        <button aria-label="锁定位置" className="ml-[7px]"><Svg w={14} h={14}><path d="M7 1v12M1 7h12" stroke="#ddd" strokeWidth="1.4" /><path d="M4.5 3.5L7 .5l2.5 3zM4.5 10.5l2.5 3 2.5-3zM3.5 4.5L.5 7l3 2.5zM10.5 4.5l3 2.5-3 2.5z" fill="#ddd" /></Svg></button>
        <button aria-label="锁定全部" className="ml-[9px]"><Svg w={12} h={14}><path d="M3.5 7V4a2.5 2.5 0 0 1 5 0v3" stroke="#ddd" strokeWidth="1.5" /><path d="M1 6h10v7H1z" fill="#ddd" /><path d="M6 8v3" stroke="#444" strokeWidth="1.5" /></Svg></button>
        <Percent label="填充" />
      </div>
      <div className="flex min-h-0 flex-1 bg-[#474747]">
        <ul className="min-w-0 flex-1 overflow-hidden">
          {['形状 5', '形状 4', '形状 3', '形状 2', '形状 1', '背景'].map(n => (
            <LayerRow key={n} name={n} selected={current === n} onSelect={() => setCurrent(n)} />
          ))}
        </ul>
        <div className="w-[15px] shrink-0 bg-[#404040]" />
      </div>
      <div className="flex h-[14px] shrink-0 items-start gap-[13px] border-t border-[#6a6a6a] bg-[#535353] pl-[37px]">
        <button aria-label="链接图层"><Svg w={14} h={13}><path d="M6 6H4a2.5 2.5 0 0 0 0 5h2M8 6h2a2.5 2.5 0 0 1 0 5H8M4 8.5h6" stroke="#999" strokeWidth="1.5" /></Svg></button>
        <button aria-label="图层样式" className="h-[13px] w-[14px] font-['Liberation_Serif'] text-[14px] leading-[14px] font-bold text-[#ddd] italic">fx</button>
        <button aria-label="添加蒙版"><Svg w={14} h={13}><path d="M0 3h14v10H0z" fill="#ddd" /><circle cx="7" cy="8.5" r="3" fill="#444" /></Svg></button>
        <button aria-label="新建调整图层"><Svg w={14} h={13}><circle cx="6" cy="7.5" r="4.8" fill="#555" stroke="#ddd" strokeWidth="1.3" /><path d="M9.5 4a5 5 0 0 1-7 7z" fill="#ddd" /><path d="M11 11h3v2z" fill="#ddd" /></Svg></button>
        <button aria-label="新建组"><Svg w={14} h={13}><path d="M1 4h7V2h5v11H1z" fill="#ddd" /></Svg></button>
        <button aria-label="新建图层"><Svg w={14} h={13}><path d="M2 3h10v10H7V8H2z" fill="#ddd" /><path d="M2 9l4 4V9z" fill="#ddd" /></Svg></button>
        <button aria-label="删除图层"><Svg w={14} h={13}><path d="M1 4h11M5 2h3" stroke="#ddd" strokeWidth="1.5" /><path d="M2.5 6v7M5 6v7M8 6v7M10.5 6v7" stroke="#ddd" strokeWidth="1.4" /></Svg></button>
      </div>
    </section>
  );
}

function RightSide() {
  return (
    <aside className="flex w-[283px] shrink-0 flex-col border-l-2 border-[#2b2b2b]">
      <div className="flex h-[13px] shrink-0 items-center justify-between border-y border-[#2b2b2b] bg-[#383838] pr-[5px] pl-[26px]">
        <button aria-label="展开面板"><Svg w={8} h={6}><path d="M3.5 0L0 3l3.5 3zM7.5 0L4 3l3.5 3z" fill="#ccc" /></Svg></button>
        <button aria-label="折叠面板"><Svg w={8} h={6}><path d="M0 0l3.5 3L0 6zM4 0l3.5 3L4 6z" fill="#ccc" /></Svg></button>
      </div>
      <div className="flex min-h-0 flex-1 bg-[#535353]">
        <Dock />
        <div className="flex min-w-0 flex-1 flex-col border-r border-l-2 border-[#2b2b2b]">
          <ColorPanel />
          <AdjustPanel />
          <LayersPanel />
        </div>
      </div>
    </aside>
  );
}

function Watermark() {
  return (
    <div className="pointer-events-none absolute right-[10px] bottom-[7px] w-[272px] whitespace-nowrap">
      <p className="pl-5 text-[20px] leading-7 text-[#959595]">激活 Windows</p>
      <p className="pl-5 text-[15px] leading-5 text-[#8c8c8c]">转到“设置”以激活 Windows。</p>
      <p className="font-['Liberation_Sans'] text-[16px] leading-6 text-[#d0d0d0]">https://blog.csdn.net/weixin_46121783</p>
    </div>
  );
}

export default function App() {
  return (
    <div className="relative flex h-screen flex-col overflow-hidden bg-[#535353] font-['Noto_Sans','Noto_Sans_CJK_SC',sans-serif]">
      <MenuBar />
      <OptionsBar />
      <div className="flex min-h-0 flex-1">
        <ToolBar />
        <DocumentArea />
        <RightSide />
      </div>
      <Watermark />
    </div>
  );
}
